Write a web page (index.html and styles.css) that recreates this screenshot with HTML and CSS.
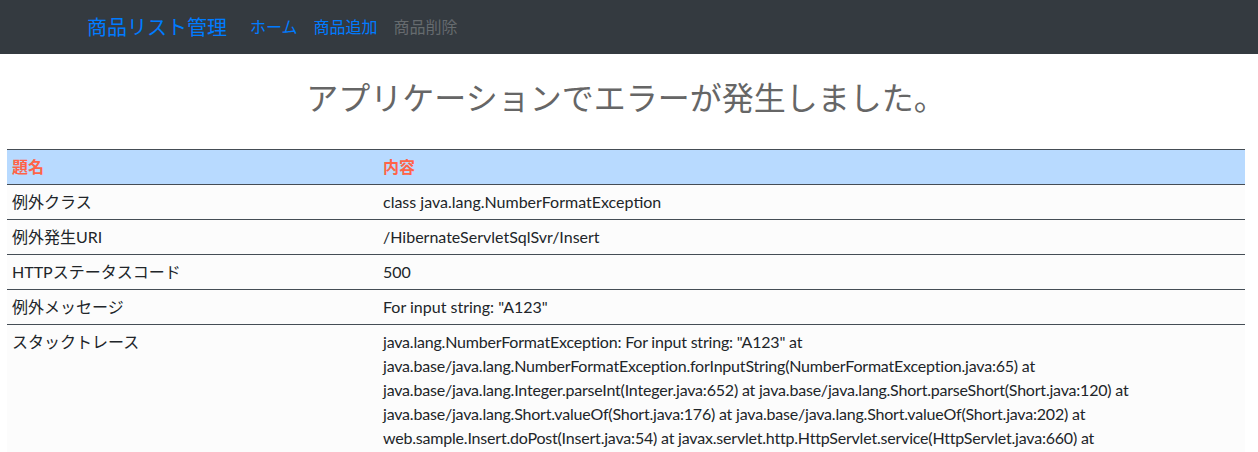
FILE: index.html
```html
<!DOCTYPE html>
<html lang="ja">
<head>
<meta charset="utf-8">
<title>エラー</title>
<link rel="stylesheet" href="styles.css">
</head>
<body>
<nav class="navbar">
  <a class="brand" href="#">商品リスト管理</a>
  <ul class="nav">
    <li><a class="nav-link" href="#">ホーム</a></li>
    <li><a class="nav-link" href="#">商品追加</a></li>
    <li><a class="nav-link disabled" href="#">商品削除</a></li>
  </ul>
</nav>
<main class="content">
  <h1 class="title">アプリケーションでエラーが発生しました。</h1>
  <table class="err-table">
    <thead>
      <tr><th class="col-name">題名</th><th>内容</th></tr>
    </thead>
    <tbody>
      <tr><td>例外クラス</td><td>class java.lang.NumberFormatException</td></tr>
      <tr><td>例外発生URI</td><td>/HibernateServletSqlSvr/Insert</td></tr>
      <tr><td>HTTPステータスコード</td><td>500</td></tr>
      <tr><td>例外メッセージ</td><td>For input string: "A123"</td></tr>
      <tr><td>スタックトレース</td><td class="trace">java.lang.NumberFormatException: For input string: "A123" at<br>java.base/java.lang.NumberFormatException.forInputString(NumberFormatException.java:65) at<br>java.base/java.lang.Integer.parseInt(Integer.java:652) at java.base/java.lang.Short.parseShort(Short.java:120) at<br>java.base/java.lang.Short.valueOf(Short.java:176) at java.base/java.lang.Short.valueOf(Short.java:202) at<br>web.sample.Insert.doPost(Insert.java:54) at javax.servlet.http.HttpServlet.service(HttpServlet.java:660) at<br>javax.servlet.http.HttpServlet.service(HttpServlet.java:741) at</td></tr>
    </tbody>
  </table>
</main>
</body>
</html>
```
FILE: styles.css
```css
html, body {
  margin: 0;
  padding: 0;
}
body {
  font-family: Lato, "Noto Sans CJK JP", sans-serif;
  font-size: 16px;
  line-height: 1.5;
  color: #212529;
  background: #fff;
}
.navbar {
  display: flex;
  align-items: center;
  height: 54px;
  padding: 0 0 0 87px;
  background: #343a40;
  box-sizing: border-box;
}
.brand {
  font-size: 20px;
  color: #007bff;
  text-decoration: none;
  margin-right: 15px;
  line-height: 1.5;
}
.nav {
  display: flex;
  list-style: none;
  margin: 0;
  padding: 0;
}
.nav-link {
  display: block;
  padding: 0 8px;
  color: #007bff;
  text-decoration: none;
}
.nav-link.disabled {
  color: rgba(255, 255, 255, 0.25);
}
.content {
  padding: 0 13px 0 7px;
}
.title {
  margin: 25px 0 32px;
  font-size: 32px;
  font-weight: 400;
  line-height: 1.2;
  color: #666;
  text-align: center;
}
.err-table {
  width: 100%;
  border-collapse: collapse;
  background: #fcfcfc;
}
.err-table th,
.err-table td {
  text-align: left;
  vertical-align: top;
  padding: 5px 5px;
  border-top: 1px solid #454d55;
}
.err-table thead th {
  background: #b8daff;
  color: #ff6347;
  font-weight: 700;
  border-bottom: 1px solid #454d55;
}
.col-name {
  width: 361px;
}
.trace {
  letter-spacing: -0.2px;
}
```
